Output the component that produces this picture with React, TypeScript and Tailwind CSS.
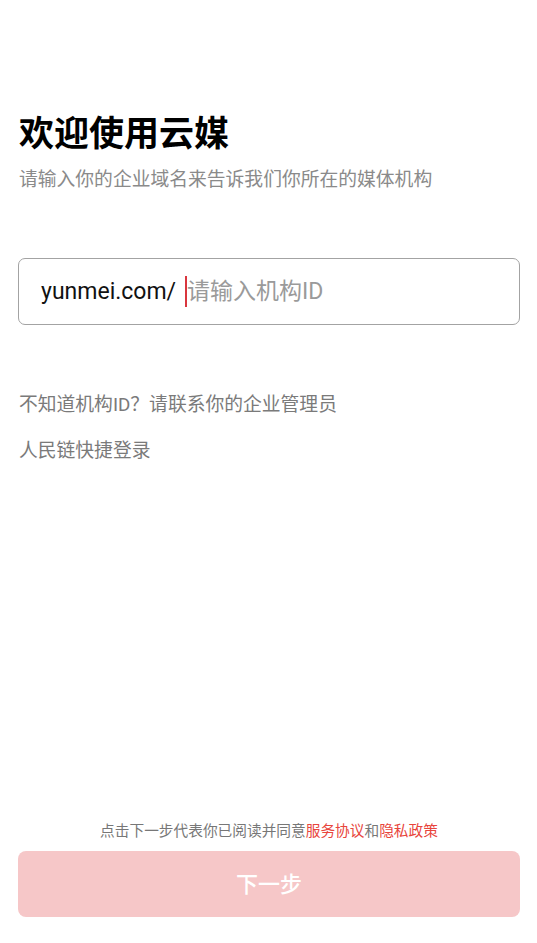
import React from "react";

export default function App() {
  return (
    <div
      className="w-[537px] h-[943px] bg-white flex flex-col pl-[18px] pr-[17px]"
      style={{ fontFamily: 'Roboto, "Noto Sans CJK SC", sans-serif' }}
    >
      <div className="flex-1 flex flex-col">
        <h1 className="mt-[111px] text-[35px] leading-[48px] font-bold text-black pl-[1px]">
          欢迎使用云媒
        </h1>
        <p className="mt-[8px] text-[18.8px] leading-[26px] text-[#8a8a8a] pl-[1px]">
          请输入你的企业域名来告诉我们你所在的媒体机构
        </p>
        <div className="mt-[65px] h-[67px] border border-[#a3a3a3] rounded-[7px] flex items-center pl-[22px]">
          <span className="text-[23px] text-[#111] leading-[30px]">yunmei.com/</span>
          <span className="ml-[9px] w-[2px] h-[31px] bg-[#d9363e]" />
          <span className="text-[23px] text-[#9a9a9a] leading-[30px]">
            请输入机构ID
          </span>
        </div>
        <p className="mt-[67px] text-[18.8px] leading-[26px] text-[#7a7a7a] pl-[1px]">
          不知道机构ID？请联系你的企业管理员
        </p>
        <p className="mt-[20px] text-[18.8px] leading-[26px] text-[#7a7a7a] pl-[1px]">
          人民链快捷登录
        </p>
      </div>
      <div className="pb-[26px] flex flex-col">
        <p className="text-center text-[14.7px] leading-[20px] text-[#777]">
          点击下一步代表你已阅读并同意
          <span className="text-[#e8453c]">服务协议</span>和
          <span className="text-[#e8453c]">隐私政策</span>
        </p>
        <button className="mt-[10px] h-[66px] w-full rounded-[8px] bg-[#f6c7c8] text-white text-[22px] font-medium">
          下一步
        </button>
      </div>
    </div>
  );
}
